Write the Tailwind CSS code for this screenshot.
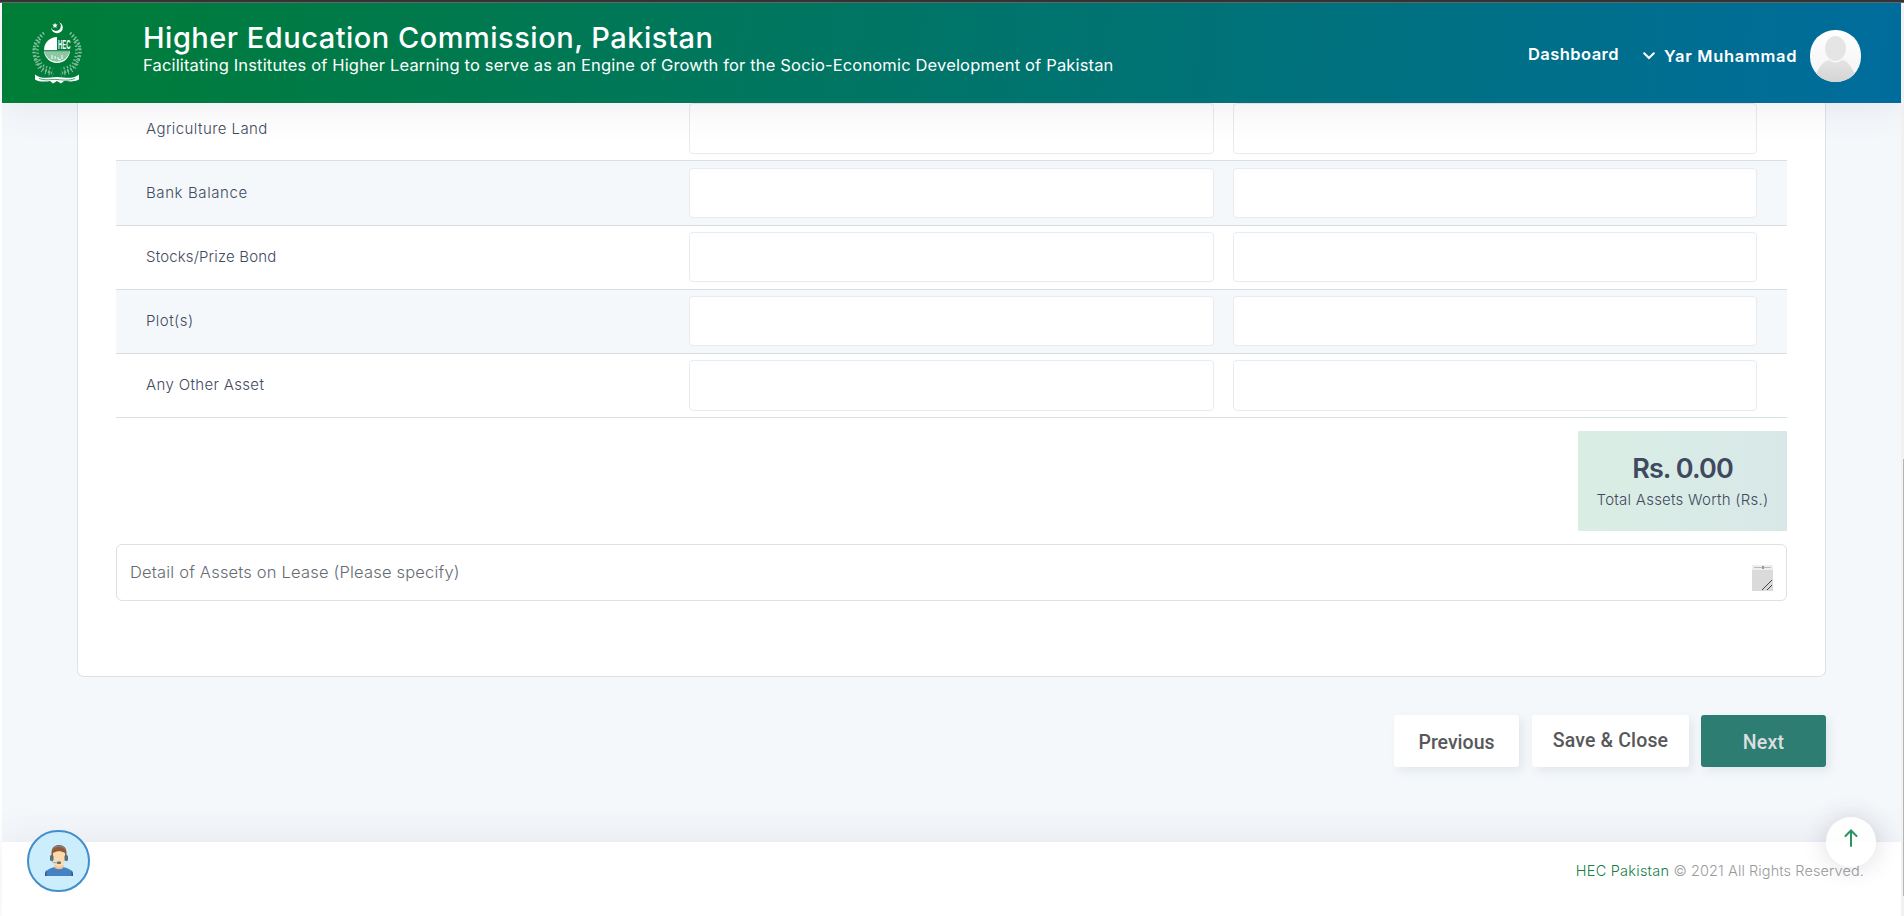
<!DOCTYPE html>
<html lang="en">
<head>
<meta charset="utf-8">
<title>Higher Education Commission, Pakistan</title>
<script src="https://cdn.jsdelivr.net/npm/@tailwindcss/browser@4"></script>
</head>
<body class="h-[916px] w-[1904px] overflow-hidden bg-white font-['Inter','Open_Sans',sans-serif] text-[#424a5e]">
<div class="flex h-[916px] flex-col">
  <div class="relative z-20 h-[3px] shrink-0 border-b border-[#666] bg-[#333]"></div>
  <div class="flex h-[913px]">
    <div class="flex w-[1901px] flex-col overflow-hidden pl-[2px]">
      <header class="relative z-10 flex h-[100px] shrink-0 items-start bg-[linear-gradient(97deg,#007d35_0%,#006c9d_100%)] pl-[29px] text-white shadow-[0_0_40px_rgba(82,63,105,0.12)]">
        <svg class="mt-[18px] h-[64px] w-[52px]" viewBox="0 0 52 64" fill="none">
          <circle cx="26" cy="6.500" r="5.800" fill="#fff"/>
          <circle cx="24.900" cy="5" r="5" fill="#007c38"/>
          <path d="M24 1.700l.8 1.700 1.900.2-1.400 1.400.3 1.900-1.600-.9-1.600.9.3-1.900-1.400-1.400 1.900-.2Z" fill="#fff"/>
          <g stroke="#fff" opacity=".5">
            <path d="M13 12C4 18 1 28 4 37S13 49 21 52M39 12C48 18 51 28 48 37S39 49 31 52" stroke-width="3" stroke-dasharray="1.500 1.700"/>
            <path d="M11 15C7 20 5 30 8 38S15 46 22 48M41 15C45 20 47 30 44 38S37 46 30 48" stroke-width="2.500" stroke-dasharray="1.300 2.200"/>
            <path d="M8 20C3 26 2 32 6 42S16 51 22 54M44 20C49 26 50 32 46 42S36 51 30 54" stroke-width="4" stroke-dasharray="1 3"/>
          </g>
          <circle cx="26" cy="29" r="13" fill="#fff"/>
          <path d="M26 15.500A13.500 13.500 0 0 1 40 29H26Z" fill="#007b3b"/>
          <path d="M13.200 30H38.800A13 13 0 0 1 13.200 30Z" fill="#8cc6a3"/>
          <path d="M13 29.700H39" stroke="#007b3b" stroke-width="1"/>
          <path d="M21 34v4M24 35v3M27 36v2l3 1M31 34v4" stroke="#fff" stroke-width="1"/>
          <text x="27" y="28" fill="#fff" font-family="Liberation Sans" font-weight="700" font-size="13" textLength="12.500" lengthAdjust="spacingAndGlyphs">HEC</text>
          <path d="M4 53.500C12 59 17 56 26 56S40 59 48 53.500V58.500C42 61.500 36 60 33 60L30 62.500 26 60 22 62.500 19 60C14 61 8 61 4 58.500Z" fill="#fff"/>
          <path d="M8 57.500C15 60 20 58 26 58.500S38 60 44 57.500" stroke="#168a4c" stroke-width=".8"/>
        </svg>
        <div class="ml-[60px] w-[1385px] pt-[17px]">
          <h1 class="h-[34px] text-[29px] leading-[35px] font-medium tracking-[0.500px] whitespace-nowrap">Higher Education Commission, Pakistan</h1>
          <p class="text-[16.500px] leading-[22px] font-normal tracking-[0.160px] whitespace-nowrap">Facilitating Institutes of Higher Learning to serve as an Engine of Growth for the Socio-Economic Development of Pakistan</p>
        </div>
        <nav class="flex items-center pt-[27px] text-[16.500px] font-semibold whitespace-nowrap">
          <a class="w-[115px] pb-[3px] tracking-[0.430px]">Dashboard</a>
          <svg class="h-[8px] w-[12px]" viewBox="0 0 12 8" fill="none" stroke="#fff" stroke-width="2" stroke-linecap="round"><path d="M1.200 1.200L6 6l4.800-4.800"/></svg>
          <a class="ml-[9px] w-[146px] tracking-[0.700px]">Yar Muhammad</a>
          <svg class="h-[52px] w-[51px]" viewBox="0 0 51 52">
            <defs><linearGradient id="ab" x2="0" y2="1"><stop stop-color="#fff"/><stop offset="1" stop-color="#f3f3f3"/></linearGradient><linearGradient id="ap" x2="0" y2="1"><stop stop-color="#e4e4e4"/><stop offset="1" stop-color="#d4d4d4"/></linearGradient><clipPath id="ac"><rect width="51" height="52" rx="25"/></clipPath></defs>
            <g clip-path="url(#ac)"><rect width="51" height="52" fill="url(#ab)"/><path d="M6 45C9 35 16 30 19 30Q25.500 35 32 30C36 30 42 36 45 45L40 52H10Z" fill="url(#ap)"/><ellipse cx="25.500" cy="18.500" rx="10.500" ry="12.500" fill="#e5e5e5"/></g>
          </svg>
        </nav>
      </header>

      <main class="flex h-[739px] shrink-0 flex-col bg-[#f4f8fb] pl-[75px]">
        <section class="h-[574px] w-[1749px] rounded-b-[7px] border border-t-0 border-[#dee2e6] bg-white px-[38px]">
          <div class="text-[15px] font-light">
            <div class="flex h-[58px] items-start border-b border-[#d9e0e5] pl-[30px]">
              <div class="w-[543px] pt-[17px] leading-[17px] tracking-[0.420px]">Agriculture Land</div>
              <div class="h-[51px] w-[525px] rounded-[4px] border border-[#e9ebf0] bg-white"></div>
              <div class="ml-[19px] h-[51px] w-[524px] rounded-[4px] border border-[#e9ebf0] bg-white"></div>
            </div>
            <div class="flex h-[65px] items-start border-b border-[#d9e0e5] bg-[#f4f8fb] pt-[7px] pl-[30px]">
              <div class="w-[543px] pt-[16px] leading-[17px] tracking-[0.600px]">Bank Balance</div>
              <div class="h-[50px] w-[525px] rounded-[4px] border border-[#e9ebf0] bg-white"></div>
              <div class="ml-[19px] h-[50px] w-[524px] rounded-[4px] border border-[#e9ebf0] bg-white"></div>
            </div>
            <div class="flex h-[64px] items-start border-b border-[#d9e0e5] pt-[6px] pl-[30px]">
              <div class="w-[543px] pt-[16px] leading-[17px] tracking-[0.150px]">Stocks/Prize Bond</div>
              <div class="h-[50px] w-[525px] rounded-[4px] border border-[#e9ebf0] bg-white"></div>
              <div class="ml-[19px] h-[50px] w-[524px] rounded-[4px] border border-[#e9ebf0] bg-white"></div>
            </div>
            <div class="flex h-[64px] items-start border-b border-[#d9e0e5] bg-[#f4f8fb] pt-[6px] pl-[30px]">
              <div class="w-[543px] pt-[16px] leading-[17px] tracking-[0.450px]">Plot(s)</div>
              <div class="h-[50px] w-[525px] rounded-[4px] border border-[#e9ebf0] bg-white"></div>
              <div class="ml-[19px] h-[50px] w-[524px] rounded-[4px] border border-[#e9ebf0] bg-white"></div>
            </div>
            <div class="flex h-[64px] items-start border-b border-[#d9e0e5] pt-[6px] pl-[30px]">
              <div class="w-[543px] pt-[16px] leading-[17px] tracking-[0.350px]">Any Other Asset</div>
              <div class="h-[51px] w-[525px] rounded-[4px] border border-[#e9ebf0] bg-white"></div>
              <div class="ml-[19px] h-[51px] w-[524px] rounded-[4px] border border-[#e9ebf0] bg-white"></div>
            </div>
          </div>
          <div class="mt-[13px] ml-auto h-[100px] w-[209px] bg-linear-to-r from-[#daeee4] to-[#d8e8e8] pt-[20px] text-center whitespace-nowrap">
            <div class="text-[27px] leading-[36px] font-semibold tracking-[-0.900px] text-[#3f4960]">Rs. 0.00</div>
            <div class="text-[15px] leading-[26px] font-light tracking-[0.240px]">Total Assets Worth (Rs.)</div>
          </div>
          <div class="mt-[13px] flex h-[57px] items-center rounded-[6px] border border-[#dee0e4] pr-[13px] pl-[13px] text-[16.500px] font-light text-[#666b73]">
            <span class="tracking-[0.190px]">Detail of Assets on Lease (Please specify)</span>
            <svg class="mt-[11px] ml-auto h-[26px] w-[21px]" viewBox="0 0 21 26"><path fill="#eee" d="M0 0h21v5H0z"/><path fill="#dadada" d="M0 5h21v21H0z"/><path fill="#bbb" d="M2 2h17v1H2z"/><path fill="#999" d="M10 1h2v3h-2z"/><path d="M10 25l10-10M15 25l5-5" stroke="#444"/></svg>
          </div>
        </section>
        <div class="mt-[38px] flex h-[52px] w-[1749px] justify-end text-center font-['Roboto',sans-serif] text-[19.500px] font-medium whitespace-nowrap text-[#58585a]">
          <button class="w-[125px] rounded-[3px] bg-white pt-[4px] shadow-[4px_4px_10px_rgba(60,70,90,0.09)]">Previous</button>
          <button class="ml-[13px] w-[157px] rounded-[3px] bg-white tracking-[0.150px] shadow-[4px_4px_10px_rgba(60,70,90,0.09)]">Save &amp; Close</button>
          <button class="ml-[12px] w-[125px] rounded-[3px] bg-[#2e7d73] pt-[4px] tracking-[0.200px] text-[#dcdfdf] shadow-[4px_4px_10px_rgba(60,70,90,0.09)]">Next</button>
        </div>
      </main>

      <footer class="relative flex h-[74px] shrink-0 justify-end bg-white pt-[19px] pr-[37px] text-[14.500px] leading-[20px] font-light text-[#9a9a9d] shadow-[0_0_40px_rgba(82,63,105,0.1)]">
        <p class="tracking-[0.100px] whitespace-nowrap"><span class="tracking-[0.250px] text-[#148046]">HEC Pakistan</span> © 2021 All Rights Reserved.</p>
        <div class="absolute top-[-25px] right-[25px] flex h-[50px] w-[50px] justify-center rounded-full bg-white/90 pt-[12px] shadow-[0_0_25px_rgba(60,50,80,0.18)]">
          <svg class="h-[18px] w-[14px]" viewBox="0 0 14 18" fill="none" stroke="#2e9160" stroke-width="2" stroke-linecap="round"><path d="M7 17V1.500M1.500 7L7 1.500 12.500 7"/></svg>
        </div>
        <div class="absolute top-[-12px] left-[25px] flex h-[62px] w-[63px] items-center justify-center rounded-full border-2 border-[#418ecb] bg-[#ccedfb]">
          <svg class="h-[32px] w-[28px]" viewBox="0 0 28 32">
            <path d="M0 31C0 26 2 24 10 22H18C26 24 28 26 28 31Z" fill="#4482c3"/>
            <path d="M0 31C0 28 .5 26 1.500 25V31ZM28 31C28 28 27.500 26 26.500 25V31Z" fill="#2c5285"/>
            <path d="M9.500 20h9v2C18 25 10 25 9.500 22Z" fill="#f5c48e"/>
            <path d="M6.500 12V7C7 2 10 0 14 0S21 2 21.500 7V12Z" fill="#905a35"/>
            <path d="M7 5C9-1 19-1 21 5C17 1 11 1 7 5Z" fill="#7d8589"/>
            <path d="M8 8C12 5.500 16 5.500 20 8V14C20 19 17 22 14 22S8 19 8 14Z" fill="#fcd8ad"/>
            <rect x="5" y="10" width="3.500" height="6" rx="1.500" fill="#53727d"/><rect x="19.500" y="10" width="3.500" height="6" rx="1.500" fill="#53727d"/>
            <path d="M6.500 16Q7 18 13 18" fill="none" stroke="#a4a4a4"/><rect x="12" y="16.500" width="4" height="2.500" rx="1" fill="#53727d"/>
          </svg>
        </div>
      </footer>
    </div>
    <div class="w-[3px] bg-[#f1f1f1] pt-[456px] pl-[2px]"><div class="h-[437px] bg-[#b5b5b5]"></div></div>
  </div>
</div>
</body>
</html>
